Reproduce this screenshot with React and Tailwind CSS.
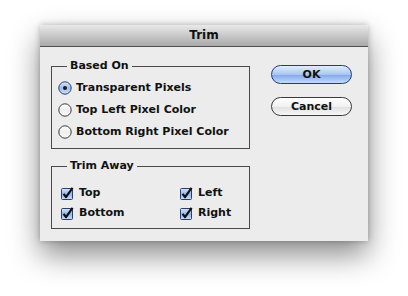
import React from 'react';

const Radio = ({ checked }) => (
  <svg width="14" height="14" viewBox="0 0 14 14" className="shrink-0">
    <defs>
      <linearGradient id="rOn" x1="0" y1="0" x2="0" y2="1">
        <stop offset="0" stopColor="#dbe8fb" />
        <stop offset="0.5" stopColor="#9dbdf0" />
        <stop offset="1" stopColor="#cfe2fb" />
      </linearGradient>
      <linearGradient id="rOff" x1="0" y1="0" x2="0" y2="1">
        <stop offset="0" stopColor="#ffffff" />
        <stop offset="0.5" stopColor="#eeeeee" />
        <stop offset="1" stopColor="#f8f8f8" />
      </linearGradient>
    </defs>
    <circle cx="7" cy="7" r="6.2" fill={checked ? 'url(#rOn)' : 'url(#rOff)'} stroke={checked ? '#2d3f66' : '#3a3a3a'} strokeWidth="1" />
    {checked && <circle cx="7" cy="7" r="2" fill="#1b1b1b" />}
  </svg>
);

const Check = () => (
  <svg width="13" height="13" viewBox="0 0 13 13" className="shrink-0">
    <defs>
      <linearGradient id="cb" x1="0" y1="0" x2="0" y2="1">
        <stop offset="0" stopColor="#d6e5fb" />
        <stop offset="0.5" stopColor="#92b6ee" />
        <stop offset="1" stopColor="#c9dffb" />
      </linearGradient>
    </defs>
    <rect x="0.5" y="1.5" width="11" height="11" rx="1" fill="url(#cb)" stroke="#2d3f66" />
    <path d="M2.6 6.8 L5 10.2 L11.6 0.8" fill="none" stroke="#111" strokeWidth="2.2" strokeLinejoin="round" />
  </svg>
);

const Option = ({ label, checked }) => (
  <div className="flex items-center h-[22px] gap-[4px]">
    <Radio checked={checked} />
    <span>{label}</span>
  </div>
);

const CheckItem = ({ label }) => (
  <div className="flex items-center h-[20px] gap-[5px]">
    <Check />
    <span>{label}</span>
  </div>
);

export default function App() {
  return (
    <div className="w-[408px] h-[296px] bg-white pt-[25px] pl-[40px] font-['DejaVu_Sans',sans-serif] font-bold text-[11px] text-[#111]">
      <div className="w-[328px] h-[216px] bg-[#ececec] shadow-[0_14px_28px_rgba(0,0,0,0.45),0_0_6px_rgba(0,0,0,0.25)] flex flex-col">
        <div className="h-[22px] shrink-0 rounded-t-[4px] bg-[linear-gradient(#e9e9e9,#c9c9c9_50%,#a9a9a9)] border-b border-[#4e4e4e] flex items-center justify-center text-[12px] pb-[1px]">
          Trim
        </div>
        <div className="flex pl-[11px] pt-[11px]">
          <div className="flex flex-col w-[199px] gap-[9px]">
            <fieldset className="border border-[#4a4a4a] px-[6px] pb-[5px]">
              <legend className="ml-[9px] px-[3px] leading-[16px]">Based On</legend>
              <div className="mt-[3px]">
                <Option label="Transparent Pixels" checked />
                <Option label="Top Left Pixel Color" />
                <Option label="Bottom Right Pixel Color" />
              </div>
            </fieldset>
            <fieldset className="border border-[#4a4a4a] px-[9px] pb-[5px]">
              <legend className="ml-[6px] px-[3px] leading-[16px]">Trim Away</legend>
              <div className="mt-[9px] grid grid-cols-[119px_1fr]">
                <CheckItem label="Top" />
                <CheckItem label="Left" />
                <CheckItem label="Bottom" />
                <CheckItem label="Right" />
              </div>
            </fieldset>
          </div>
          <div className="flex flex-col ml-[21px] mt-[7px] gap-[13px]">
            <button className="w-[81px] h-[19px] rounded-full border border-[#1f3e80] bg-[linear-gradient(#e3edfb,#a9c6f2_50%,#85abea_55%,#c4dafa)] font-bold leading-none">
              OK
            </button>
            <button className="w-[81px] h-[19px] rounded-full border border-[#3a3a3a] bg-[linear-gradient(#ffffff,#f1f1f1_50%,#e2e2e2_55%,#f7f7f7)] font-bold leading-none">
              Cancel
            </button>
          </div>
        </div>
      </div>
    </div>
  );
}
